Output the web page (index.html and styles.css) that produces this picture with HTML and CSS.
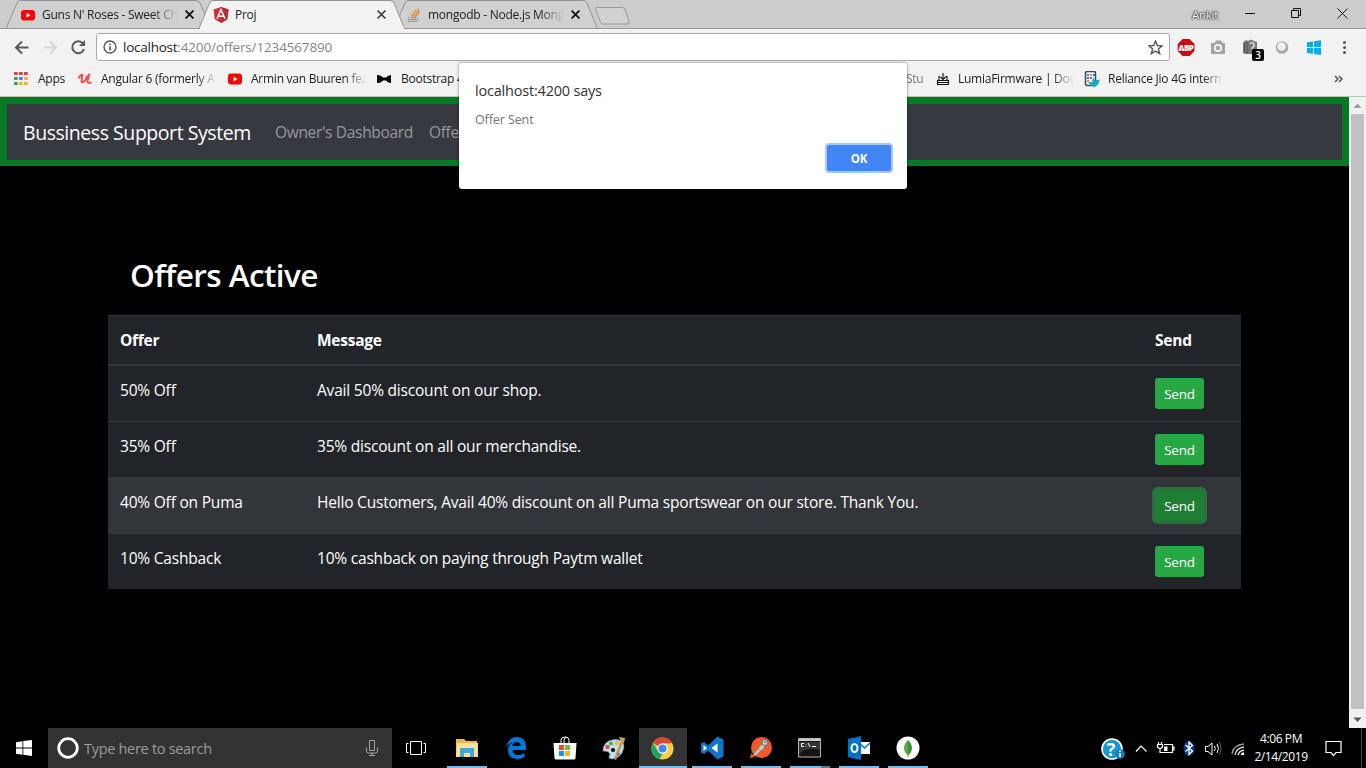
FILE: index.html
```html
<!DOCTYPE html>
<html lang="en">
<head>
<meta charset="utf-8">
<title>Proj</title>
<link rel="stylesheet" href="styles.css">
</head>
<body>
<div class="desktop">
  <header class="tabstrip">
    <svg class="tab-shapes" width="640" height="29" viewBox="0 0 640 29">
      <path d="M6 28.5 17 3Q18.5.5 20 .5H196Q198.500.5 200 3L211 28.500Z" fill="#d0d0d0" stroke="#929292"/>
      <path d="M394 28.500 405 3Q406.500.5 408 .5H583Q585.500.5 587 3L597.500 28.500Z" fill="#d0d0d0" stroke="#929292"/>
      <path d="M0 28.500H640" stroke="#999"/>
      <path d="M199 28.500 209.500 3Q211 .5 213 .5H390Q392.500.5 394 3L404.500 28.500Z" fill="#f2f2f2" stroke="#929292"/>
      <path d="M200 28.500H404" stroke="#f2f2f2" stroke-width="2"/>
      <path d="M597 7.500H622Q624 7.500 625 9L629 21.500Q629.500 24 627.500 24H603.500Q601.500 24 600.500 22L595.500 9.500Q595 7.500 597 7.500Z" fill="#d0d0d0" stroke="#999"/>
    </svg>
    <div class="tab tab-first">
      <svg class="ic14" viewBox="0 0 14 14"><rect y="2" width="14" height="10.500" rx="3" fill="#f00"/><path d="M5.500 4.800v5l4-2.500z" fill="#fff"/></svg>
      <span class="tab-title fade">Guns N' Roses - Sweet Ch</span>
      <svg class="tab-x" viewBox="0 0 8 8"><path d="m.5.5 7 7m0-7-7 7" stroke="#111" stroke-width="1.600"/></svg>
    </div>
    <div class="tab tab-active">
      <svg class="ic16" viewBox="0 0 16 16"><path d="m8 0 7.500 2.600-1.200 9.600L8 16l-6.300-3.800L.5 2.600z" fill="#d32f36"/><path d="m8 0 7.500 2.600-1.200 9.600L8 16z" fill="#b52e31"/><path d="M4 11.800 8 2.700l4 9.100M5.800 9.200h4.400" fill="none" stroke="#fff" stroke-width="1.500"/></svg>
      <span class="tab-title">Proj</span>
      <svg class="tab-x" viewBox="0 0 8 8"><path d="m.5.5 7 7m0-7-7 7" stroke="#333" stroke-width="1.400"/></svg>
    </div>
    <div class="tab tab-last">
      <svg class="ic14" viewBox="0 0 14 14"><path d="M1.500 9v4.300h9V9" fill="none" stroke="#a5a5a5" stroke-width="1.200"/><path d="M3 11.300h6M3.200 9.100l5.900.6M4 6.600l5.500 1.800M5.700 4l4.600 3.400M8 1.800l3.200 4.600M10.800.5l1.200 5.200" stroke="#f48024" stroke-width="1.300"/></svg>
      <span class="tab-title fade">mongodb - Node.js Mong</span>
      <svg class="tab-x" viewBox="0 0 8 8"><path d="m.5.5 7 7m0-7-7 7" stroke="#111" stroke-width="1.600"/></svg>
    </div>
    <div class="window-controls">
      <span class="profile">Ankit</span>
      <svg width="116" height="28" viewBox="0 0 116 28" fill="none" stroke="#111"><path d="M10 13.500h10M56.500 10.500h7v7h-7zM58.500 10.500v-2h7v7h-2M102.500 8.500l10 10m0-10-10 10"/></svg>
    </div>
  </header>

  <div class="toolbar">
    <svg class="nav-icons" width="96" height="34" viewBox="0 0 96 34" fill="none" stroke-width="2">
      <path d="M28.500 18.500H16m6-6-6 6 6 6" stroke="#5a5a5a"/>
      <path d="M43.500 18.500H56m-6-6 6 6-6 6" stroke="#d5d5d5"/>
      <path d="M83 14.500a6 6 0 1 0 1 5.500" stroke="#5a5a5a"/><path d="M85 11v6h-6z" fill="#5a5a5a"/>
    </svg>
    <div class="omnibox">
      <svg class="info" viewBox="0 0 14 14"><circle cx="7" cy="7" r="6" fill="none" stroke="#555" stroke-width="1.400"/><path d="M7 6.200v4.300M7 3.500v1.500" stroke="#555" stroke-width="1.600"/></svg>
      <span class="url"><span class="host">localhost</span>:4200/offers/1234567890</span>
      <svg class="star" viewBox="0 0 14 14"><path d="m7 1 1.700 4.100 4.500.3-3.500 2.900 1.200 4.400L7 10.300l-3.900 2.400 1.200-4.400L.8 5.400l4.500-.3z" fill="none" stroke="#555" stroke-width="1.300"/></svg>
    </div>
    <svg class="extensions" width="196" height="34" viewBox="0 0 196 34">
      <path d="M12.600 10h7l4.900 4.900v7.200L19.600 27h-7l-4.900-4.900v-7.200z" fill="#c70d12"/>
      <text x="16" y="21.700" class="abp-text">ABP</text>
      <path d="M41.500 14h3l1.500-2.500h5L52.500 14h2q.5 0 .5.500v10q0 .5-.5.500h-13q-.5 0-.5-.5v-10q0-.5.500-.5z" fill="#a3a3a3"/><circle cx="48" cy="19" r="3.200" fill="none" stroke="#f7f7f7" stroke-width="1.800"/>
      <path d="M73 13.500 76 11l2 1 3-1.500 4 2 2 .5v9l-2 3H75l-2-1z" fill="#777"/><path d="M74.500 14v9.500M77 13v11" stroke="#555"/><path d="M80 15q2-3 4 0 1 2-2 4v1" fill="none" stroke="#ddd" stroke-width="1.500"/>
      <rect x="82" y="20" width="12" height="12" rx="2"/><text x="88" y="30" class="badge-text">3</text>
      <circle cx="112" cy="18.500" r="6.300" fill="#a8a8a8"/><circle cx="111.500" cy="17.500" r="4.300" fill="#efefef"/>
      <path d="m137 13.300 6-.9v5.700h-6zm7-1 7-1v6.800h-7zm-7 6.800h6v5.700l-6-.9zm7 0h7v6.800l-7-1z" fill="#00adef"/>
      <g fill="#555"><circle cx="174.500" cy="13.500" r="1.500"/><circle cx="174.500" cy="18.500" r="1.500"/><circle cx="174.500" cy="23.500" r="1.500"/></g>
    </svg>
  </div>

  <nav class="bookmarks">
    <svg class="bm-icon" viewBox="0 0 14 14"><path d="M0 0h3.700v3H0zm5 0h3.700v3H5zm5 0h3.700v3H10z" fill="#d54545"/><path d="M0 5h3.700v3H0zM0 10h3.700v3H0z" fill="#42a05a"/><path d="M5 5h3.700v3H5z" fill="#3d88dd"/><path d="M10 5h3.700v3H10zM5 10h3.700v3H5zm5 0h3.700v3H10z" fill="#e9b63a"/></svg>
    <span>Apps</span>
    <svg class="bm-icon" viewBox="0 0 14 14"><path d="M.5 6.500Q3 2 4.500 3L3.500 9q0 3 4-1L9.500 3.500M11.500 1.500 9.500 9q0 3.500 4 1" fill="none" stroke="#ec5252" stroke-width="2"/></svg>
    <span class="fade">Angular 6 (formerly A</span>
    <svg class="bm-icon" viewBox="0 0 14 14"><rect y="1.500" width="14" height="11" rx="3" fill="#f00"/><path d="M5.500 4.500v5l4-2.500z" fill="#fff"/></svg>
    <span class="fade">Armin van Buuren fea</span>
    <svg class="bm-icon" viewBox="0 0 14 14"><path d="M0 3Q3.500 2.500 6 5.500h3q2.500-3 6-2.500v8Q11.500 11.500 9 8.500H6Q3.500 11.500 0 11z"/></svg>
    <span>Bootstrap 4</span>
    <span class="fade stu">Stu</span>
    <svg class="bm-icon" viewBox="0 0 14 14"><path d="M4 4.500H3v4M9.500 4.500h1.500v4M1.500 8.500h11v4h-11zM2 10.500h10M7 1v6M4.500 5 7 7.500 9.500 5" fill="none" stroke="#111" stroke-width="1.100"/></svg>
    <span class="fade">LumiaFirmware | Dow</span>
    <svg class="bm-icon reliance-icon" viewBox="0 0 16 16"><rect x="1.500" y=".5" width="10" height="14" rx="1.500" fill="#eef" stroke="#354e5d" stroke-width="1.500"/><path d="M3 3h2v2H3z" fill="#52a35d"/><path d="M6 3h2v2H6zM3 9h2v2H3z" fill="#eaa13a"/><path d="M3 6h2v2H3zm3 0h2v2H6zm3-3h2v2H9z" fill="#487c9e"/><path d="m7 15-3-4.500 4 1 1-5 2 3 5-1-2 5-3 2.500z" fill="#1aa7b5"/></svg>
    <span class="fade">Reliance Jio 4G intern</span>
    <svg class="overflow" viewBox="0 0 9 8"><path d="m1 1 3 3-3 3m4-6 3 3-3 3" fill="none" stroke="#555" stroke-width="1.500"/></svg>
  </nav>

  <div class="viewport">
    <main class="page">
      <nav class="navbar">
        <span class="brand">Bussiness Support System</span>
        <span class="nav-link">Owner's Dashboard</span>
        <span class="nav-link">Offe</span>
      </nav>
      <h2>Offers Active</h2>
      <table class="offers">
        <thead><tr><th class="c-offer">Offer</th><th class="c-message">Message</th><th class="c-send">Send</th></tr></thead>
        <tbody>
          <tr><td>50% Off</td><td>Avail 50% discount on our shop.</td><td><button>Send</button></td></tr>
          <tr><td>35% Off</td><td>35% discount on all our merchandise.</td><td><button>Send</button></td></tr>
          <tr class="hovered"><td>40% Off on Puma</td><td>Hello Customers, Avail 40% discount on all Puma sportswear on our store. Thank You.</td><td><button class="pressed">Send</button></td></tr>
          <tr><td>10% Cashback</td><td>10% cashback on paying through Paytm wallet</td><td><button>Send</button></td></tr>
        </tbody>
      </table>
    </main>
    <div class="scrollbar">
      <svg width="17" height="17" viewBox="0 0 17 17"><path d="m4.500 11 4-4.500 4 4.500z" fill="#9f9f9f"/></svg>
      <div class="thumb"></div>
      <svg width="17" height="17" viewBox="0 0 17 17"><path d="m4.500 6.500 4 4.500 4-4.500z" fill="#555"/></svg>
    </div>
  </div>

  <footer class="taskbar">
    <div class="start"><svg width="16" height="16" viewBox="0 0 16 16"><path d="m0 2.200 6.500-1v6.300H0zm7.300-1.100L16 0v7.500H7.300zM0 8.400h6.500v6.300l-6.500-1zm7.300 0H16V16l-8.700-1.200z" fill="#fff"/></svg></div>
    <div class="search">
      <svg width="22" height="22" viewBox="0 0 22 22"><circle cx="11" cy="11" r="9.300" fill="none" stroke="#fff" stroke-width="2.700"/></svg>
      <span>Type here to search</span>
      <svg class="mic" width="12" height="18" viewBox="0 0 12 18" fill="none" stroke="#a5a5a5"><path d="M3.500 1.500h5v10h-5zM.5 8.500v3q0 2.500 2 2.500h7q2 0 2-2.500v-3M6 14v2.500M3 16.500h6"/></svg>
    </div>
    <div class="app taskview"><svg width="20" height="16" viewBox="0 0 20 16" fill="none" stroke="#fff"><path d="M4.500 1.500h11v13h-11zM2.500 3.500h-2v9h2M17.500 3.500h2v9h-2"/></svg></div>
    <div class="app open"><svg width="22" height="20" viewBox="0 0 22 20"><path d="M0 1h8l2 2h11v16H0z" fill="#e8b952"/><path d="M1 5h21v14H0z" fill="#fbe093"/><path d="M4 11q0-1 1-1h12q1 0 1 1v8h-4v-4H8v4H4z" fill="#3da9d8"/></svg></div>
    <div class="app"><svg width="22" height="22" viewBox="0 0 22 22"><path d="M1 10Q3 1 11.500 0 20.500 0 21 9v4H7.500q.5 5 6 5 3.500 0 6-1.700V20q-3 2-7.500 2-9-.5-9-9 0-5 5-8Q4 6 1 10zm6.500-1h8q0-4-4-4t-4 4z" fill="#0078d7"/></svg></div>
    <div class="app"><svg width="24" height="24" viewBox="0 0 24 24"><path d="M.5 7h23l-1 15q0 1.500-1.500 1.500H3q-1.500 0-1.500-1.500z" fill="#fff"/><path d="M8 7V4q0-3 4-3t4 3v3M11 7V4q0-2 3-3" fill="none" stroke="#fff"/><path d="M6 9h5v5H6z" fill="#e74c25"/><path d="M12 9h5v5h-5z" fill="#7cbb28"/><path d="M6 15h5v5H6z" fill="#00a1e8"/><path d="M12 15h5v5h-5z" fill="#fdb813"/></svg></div>
    <div class="app"><svg width="24" height="24" viewBox="0 0 24 24"><path d="M1 15Q1 5 12 3.500 22 3 22 11q-2 11-12 12-5-1-2-4 0-4-7-4z" fill="#bddfee" stroke="#719fb8" stroke-width=".6"/><circle cx="5.500" cy="11" r="2.200" fill="#e0503e"/><circle cx="9" cy="7.500" r="2" fill="#58a748"/><circle cx="15" cy="7" r="2.200" fill="#eebb3e"/><circle cx="16" cy="18" r="2" fill="#447bca"/><circle cx="11" cy="14" r="2"/><path d="m12 23 2 1 7-18-2-1z" fill="#d98835"/><path d="m17 1 6 1-1 5-3-1z" fill="#c8a26b"/></svg></div>
    <div class="app open current"><svg width="23" height="23" viewBox="0 0 23 23"><circle cx="11.500" cy="11.500" r="11" fill="#f9ce40"/><path d="M11.500 11.500 1.900 5.900A11.100 11.100 0 0 1 21.300 6.300H11.500z" fill="#db4437"/><path d="M1.900 6 7 14.100l4.500 2.400-3 5.700A11 11 0 0 1 1.900 6z" fill="#1fa463"/><circle cx="11.500" cy="11.500" r="5.200" fill="#fff"/><circle cx="11.500" cy="11.500" r="4.100" fill="#4486f4"/></svg></div>
    <div class="app open"><svg width="24" height="24" viewBox="0 0 24 24"><path d="m17.500.5 6 3v17l-6 3-9.500-9-4 3.500-3-1.500v-9L4 6l4 3.500z" fill="#1177c4"/><path d="M17.500 7.500v9l-6-4.500zM3.500 9v6L7 12z" fill="#fff"/></svg></div>
    <div class="app open"><svg width="22" height="22" viewBox="0 0 22 22"><circle cx="11.500" cy="10.500" r="10.500" fill="#ef5b2b"/><path d="m0 21 1-5 4 4z" fill="#e85c28"/><path d="m3 18 7-9 3-2 2 2-2 3-8 7zM7 11l5 4" fill="#ccc" stroke="#777" stroke-width=".7"/><circle cx="15" cy="5.500" r="3" fill="#d8d8d8" stroke="#666"/><path d="M14 5h3" stroke="#555"/></svg></div>
    <div class="app open grouped"><svg width="23" height="20" viewBox="0 0 23 20"><path d="M.5.500h22v18.500H.5z" fill="#151515" stroke="#b4b4b4"/><path d="M1 1h21v2H1z" fill="#ccc"/><path d="M1 4h21v8Q7 8 1 17z" fill="#343434"/><path d="M6 5.500H3.500v3H6M8 6v.5m0 1.500v.5M10 5l2 4M14 8.500h4" fill="none" stroke="#fff"/></svg></div>
    <div class="app open"><svg width="22" height="24" viewBox="0 0 22 24"><path d="M10 6h12v12H10z" fill="#fff"/><path d="m11 7 5.500 5L22 7" fill="none" stroke="#0072c6" stroke-width="1.500"/><path d="m0 3 13-3v24L0 21z" fill="#0072c6"/><ellipse cx="6.500" cy="12" rx="3" ry="4" fill="none" stroke="#fff" stroke-width="2"/></svg></div>
    <div class="app open"><svg width="24" height="24" viewBox="0 0 24 24"><circle cx="12" cy="12" r="11.500" fill="#fff"/><path d="M12 4q-4 4-4 8 0 4 4 7.500z" fill="#57ad48"/><path d="M12 4q4 4 4 8 0 4-4 7.500z" fill="#3f9138"/><path d="M12 18v3" stroke="#7b7b7b"/></svg></div>
    <div class="tray">
      <svg width="150" height="40" viewBox="0 0 150 40">
        <circle cx="12" cy="21" r="10" fill="#1399d0" stroke="#fff" stroke-width="1.600"/><text x="11" y="27.500" class="help-text">?</text><circle cx="20" cy="26" r="4.800" fill="#1680b6"/><path d="M20 22.500v1.500m0 1v4" stroke="#fff" stroke-width="1.500"/>
        <g fill="none" stroke="#fff" stroke-width="1.200"><path d="m36 23.500 5-5.500 5.500 5.500"/><path d="M64 16.500h8.500v8H62M72.500 19h1.500v3h-1.500M58.500 14v2.500m3-2.500v2.500M57.500 16.500h5v2.500q-2.500 3-5 0zM60 21v3.500h2"/></g>
        <path d="M64 18.500h3.500v4.500H64z" fill="#fff"/>
        <ellipse cx="89" cy="20.500" rx="5.500" ry="7.500" fill="#063c80"/><path d="m85.500 17 7 6-3.500 3.500V14l3.500 3.500-7 6" fill="none" stroke="#fff" stroke-width="1.300"/>
        <g fill="none" stroke="#fff"><path d="M105.500 18.500h2.500l4-3.500v12l-4-3.500h-2.500z"/><path d="M114.500 18q1.500 2.500 0 5M117 16q3 4.500 0 9"/><path d="M119 14q4 6.500 0 13" stroke="#666"/></g>
        <g fill="none" stroke="#ddd" stroke-width="1.300"><path d="M132 26q1-9 12-10" stroke="#999"/><path d="M135 27q1-7 9-8M138 27q1-4 6-5M141 27q1-2 3-2"/></g><circle cx="143" cy="26" r="1.300" fill="#fff"/>
      </svg>
      <div class="clock"><span>4:06 PM</span><span>2/14/2019</span></div>
      <svg class="notify" width="17" height="17" viewBox="0 0 17 17"><path d="M1 1.500h15v11h-5l-2.500 3-2.500-3H1z" fill="none" stroke="#fff" stroke-width="1.200"/></svg>
      <div class="peek"></div>
    </div>
  </footer>
  <section class="dialog">
    <h1>localhost:4200 says</h1>
    <p>Offer Sent</p>
    <button>OK</button>
  </section>
</div>
</body>
</html>
```
FILE: styles.css
```css
* { box-sizing: border-box; }
body { margin: 0; font-family: "Open Sans", "Noto Sans", sans-serif; }
svg { display: block; flex: none; }
.desktop { position: relative; width: 1366px; height: 768px; overflow: hidden; display: flex; flex-direction: column; background: #000; }
.fade { -webkit-mask-image: linear-gradient(to right, #000 82%, transparent 100%); mask-image: linear-gradient(to right, #000 82%, transparent 100%); }

.tabstrip { position: relative; height: 29px; flex: none; display: flex; background: #ccc; border-bottom: 1px solid #999; font-size: 12px; letter-spacing: -.25px; color: #222; }
.tab-shapes { position: absolute; left: 0; top: 0; }
.tab { position: relative; display: flex; align-items: center; height: 29px; }
.tab-first { margin-left: 21px; width: 173px; }
.tab-active { margin-left: 19px; width: 173px; }
.tab-last { margin-left: 21px; width: 173px; }
.tab-title { margin-left: 7px; width: 136px; white-space: nowrap; }
.tab-active .tab-title { margin-left: 6px; }
.tab-x { width: 9px; height: 9px; margin-left: auto; }
.ic14 { width: 14px; height: 14px; }
.ic16 { width: 16px; height: 16px; }
.window-controls { margin-left: auto; display: flex; align-items: center; padding-right: 15px; height: 28px; gap: 17px; }
.profile { color: #fff; font-size: 11.500px; text-shadow: 0 0 2px #222, 0 0 2px #333, 0 0 1px #222; }

.toolbar { height: 34px; flex: none; background: #f2f2f2; display: flex; align-items: flex-start; }
.omnibox { width: 1074px; height: 28px; margin-top: 4px; border: 1px solid #aaa; border-radius: 3px; background: #fff; display: flex; align-items: center; padding: 0 6px; font-size: 13.500px; }
.info { width: 14px; height: 14px; margin-right: 6px; }
.url { color: #858585; letter-spacing: -.15px; }
.host { color: #222; letter-spacing: -.25px; }
.star { width: 15px; height: 15px; margin-left: auto; }
.abp-text { font-size: 8px; font-weight: 800; fill: #fff; text-anchor: middle; letter-spacing: -.4px; }
.badge-text { font-size: 10px; font-weight: 600; fill: #fff; text-anchor: middle; }

.bookmarks { height: 34px; flex: none; background: #f2f2f2; border-bottom: 1px solid #b7c7ba; display: grid; grid-template-columns: 24px 40px 23px 127px 23px 126px 24px 482px 53px 22px 126px 24px 226px 9px; padding: 0 0 2px 14px; align-items: center; font-size: 12px; letter-spacing: -.25px; color: #222; }
.bookmarks span { white-space: nowrap; }
.bookmarks .fade { width: 116px; }
.bookmarks .stu { width: 20px; margin-left: 24px; color: #777; justify-self: start; transform: translateX(-1px); }
.bm-icon { width: 14px; height: 14px; }
.reliance-icon { width: 16px; height: 16px; }
.overflow { width: 9px; height: 8px; }

.viewport { flex: 1; min-height: 0; display: flex; }
.page { width: 1349px; background: #000; color: #fff; }
.navbar { height: 69px; border: 7px solid #047a25; border-bottom-width: 6px; background: #363940; display: flex; align-items: center; padding-left: 16px; font-size: 15.500px; }
.brand { font-size: 19.500px; width: 252px; letter-spacing: -.45px; white-space: nowrap; }
.nav-link { color: #96989b; margin-right: 16px; letter-spacing: -.32px; white-space: nowrap; }
h2 { margin: 90px 0 0 130px; font-size: 31.500px; line-height: 38px; font-weight: 600; letter-spacing: -.6px; }
.offers { margin: 21px 0 0 108px; width: 1133px; table-layout: fixed; border-collapse: separate; border-spacing: 0; background: #212529; font-size: 15.500px; line-height: 24px; letter-spacing: -.2px; }
.offers th { height: 51px; padding: 12px; text-align: left; font-weight: 700; letter-spacing: -.25px; border-top: 1px solid #32383e; border-bottom: 2px solid #32383e; }
.offers td { padding: 12px; vertical-align: top; border-top: 1px solid #32383e; }
.offers tbody tr:first-child td { border-top: 0; }
.offers .c-offer { width: 197px; }
.offers .c-message { width: 838px; }
.offers .hovered { background: #323539; }
.offers button { display: block; width: 49px; height: 31px; border: 0; padding: 1px 0 0; border-radius: 3px; background: #28a745; color: #fff; font: 13.500px/30px "Open Sans", sans-serif; letter-spacing: -.2px; }
.offers .pressed { background: #1e7e34; box-shadow: 0 0 0 3px #2c6e3e; }

.scrollbar { width: 17px; background: #f1f1f1; display: flex; flex-direction: column; }
.thumb { width: 13px; flex: 1; margin: 0 2px 2px; background: #c1c1c1; }

.taskbar { height: 40px; flex: none; display: flex; background: #000; }
.start { width: 48px; display: grid; place-items: center; }
.search { width: 344px; background: #333; display: flex; align-items: center; padding: 0 14px 0 9px; color: #9b9b9b; font-size: 14.500px; letter-spacing: -.3px; }
.search span { margin-left: 5px; }
.mic { margin-left: auto; }
.app { width: 49px; height: 40px; position: relative; display: grid; place-items: center; }
.app.taskview { width: 50px; padding-right: 2px; }
.open::after { content: ""; position: absolute; left: 5px; width: 40px; bottom: 0; height: 2px; background: #76b9ed; }
.app.current { background: linear-gradient(to right, transparent 1px, #333 1px); }
.current::after { left: 1px; width: 48px; }
.grouped::after { background: linear-gradient(to right, #76b9ed 31px, #527fa3 31px); }
.tray { margin-left: auto; display: flex; align-items: center; }
.help-text { font-size: 18px; font-weight: 700; fill: #fff; text-anchor: middle; }
.clock { width: 62px; margin-right: 13px; color: #fff; display: flex; flex-direction: column; align-items: center; font-size: 12px; line-height: 18px; letter-spacing: -.4px; }
.peek { width: 1px; height: 40px; margin: 0 4px 0 19px; background: #444; }

.dialog { position: absolute; left: 459px; top: 63px; width: 448px; height: 126px; background: #fff; border-radius: 3px; box-shadow: 0 0 3px rgba(0,0,0,.55); padding: 18px 16px; display: flex; flex-direction: column; }
.dialog h1 { margin: 0; font-size: 14.500px; line-height: 20px; font-weight: 400; color: #333; letter-spacing: -.2px; }
.dialog p { margin: 10px 0 0; font-size: 12.500px; line-height: 18px; color: #757575; letter-spacing: -.1px; }
.dialog button { width: 64px; height: 29px; margin: 16px 0 0; align-self: flex-end; border: 0; border-radius: 2px; background: #4285f4; color: #fff; box-shadow: 0 0 0 2px #a9c8fa; font: 700 11.500px "Open Sans", sans-serif; letter-spacing: -.2px; }
```
